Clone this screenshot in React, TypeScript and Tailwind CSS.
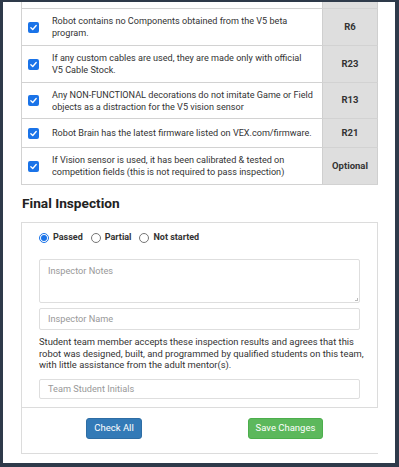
import React from 'react'

const rows = [
  { lines: ['Robot contains no Components obtained from the V5 beta', 'program.'], rule: 'R6', h: 'h-[37px]' },
  { lines: ['If any custom cables are used, they are made only with official', 'V5 Cable Stock.'], rule: 'R23', h: 'h-[37px]' },
  { lines: ['Any NON-FUNCTIONAL decorations do not imitate Game or Field', 'objects as a distraction for the V5 vision sensor'], rule: 'R13', h: 'h-[36px]' },
  { lines: ['Robot Brain has the latest firmware listed on VEX.com/firmware.'], rule: 'R21', h: 'h-[29px]' },
  { lines: ['If Vision sensor is used, it has been calibrated & tested on', 'competition fields (this is not required to pass inspection)'], rule: 'Optional', h: 'h-[37px]' },
]

const agreement = [
  'Student team member accepts these inspection results and agrees that this',
  'robot was designed, built, and programmed by qualified students on this team,',
  'with little assistance from the adult mentor(s).',
]

function CheckBox() {
  return (
    <span className="flex h-[11px] w-[11px] shrink-0 items-center justify-center rounded-[2px] bg-[#1a73e8]">
      <svg viewBox="0 0 12 12" className="h-[9px] w-[9px]">
        <path d="M2.5 6.2 L5 8.6 L9.6 3.4" fill="none" stroke="white" strokeWidth="1.8" strokeLinecap="round" strokeLinejoin="round" />
      </svg>
    </span>
  )
}

function Radio({ checked }: { checked?: boolean }) {
  return (
    <span
      className={`flex h-[10px] w-[10px] shrink-0 items-center justify-center rounded-full border ${
        checked ? 'border-[#1a73e8]' : 'border-[#767676]'
      }`}
    >
      {checked && <span className="h-[6px] w-[6px] rounded-full bg-[#1a73e8]" />}
    </span>
  )
}

export default function App() {
  return (
    <div className="h-[467px] w-[399px] overflow-hidden border-t-[2px] border-l-[3px] border-r-[4px] border-b-[4px] border-[#2e3a4a] bg-white font-['Roboto',sans-serif] text-[#333]">
      <div className="ml-[18px] w-[357px]">
        <div className="flex h-[7px] border-b border-[#d2d2d2]">
          <div className="flex-1 border-l border-[#d2d2d2]" />
          <div className="w-[56px] border-x border-[#cfcfcf] bg-[#dedede]" />
        </div>
        {rows.map((r) => (
          <div key={r.rule} className={`flex ${r.h} border-b border-[#d2d2d2]`}>
            <div className="flex flex-1 items-center border-l border-[#d2d2d2] pl-[6px]">
              <CheckBox />
              <div className="ml-[13px] text-[9.1px] leading-[12px] whitespace-nowrap">
                {r.lines.map((l) => (
                  <div key={l}>{l}</div>
                ))}
              </div>
            </div>
            <div className="flex w-[56px] items-center justify-center border-x border-[#cfcfcf] bg-[#dedede] text-[9.5px] font-bold">
              {r.rule}
            </div>
          </div>
        ))}

        <h2 className="mt-[10px] mb-[10px] pl-[1px] text-[13.7px] leading-[17px] font-bold text-[#222]">Final Inspection</h2>

        <div className="border border-[#dcdcdc] px-[17px] pt-[9px] pb-[8px]">
          <div className="flex h-[12px] items-center text-[9px] font-bold">
            <Radio checked />
            <span className="ml-[4px]">Passed</span>
            <span className="ml-[8px]">
              <Radio />
            </span>
            <span className="ml-[4px]">Partial</span>
            <span className="ml-[8px]">
              <Radio />
            </span>
            <span className="ml-[4px]">Not started</span>
          </div>
          <div className="relative mt-[15px] h-[44px] rounded-[2px] border border-[#dedede] px-[8px] pt-[4px] text-[9.2px] text-[#999]">
            Inspector Notes
            <span className="absolute right-[1px] bottom-[1px] h-[3px] w-[3px] border-r border-b border-[#bbb]" />
          </div>
          <div className="mt-[5px] flex h-[22px] items-center rounded-[2px] border border-[#dedede] px-[8px] text-[9.2px] text-[#999]">
            Inspector Name
          </div>
          <div className="mt-[6px] text-[9.4px] leading-[11.5px] whitespace-nowrap">
            {agreement.map((l) => (
              <div key={l}>{l}</div>
            ))}
          </div>
          <div className="mt-[8px] flex h-[20px] items-center rounded-[2px] border border-[#dedede] px-[8px] text-[9.2px] text-[#999]">
            Team Student Initials
          </div>
        </div>

        <div className="flex border-b border-l border-[#dcdcdc] pt-[10px] pb-[14px]">
          <button className="ml-[64px] flex h-[21px] w-[56px] items-center justify-center rounded-[3px] border border-[#2e6da4] bg-[#337ab7] text-[9.5px] text-white">
            Check All
          </button>
          <button className="ml-[106px] flex h-[21px] w-[75px] items-center justify-center rounded-[3px] border border-[#4cae4c] bg-[#5cb85c] text-[9.5px] text-white">
            Save Changes
          </button>
        </div>
      </div>
    </div>
  )
}
